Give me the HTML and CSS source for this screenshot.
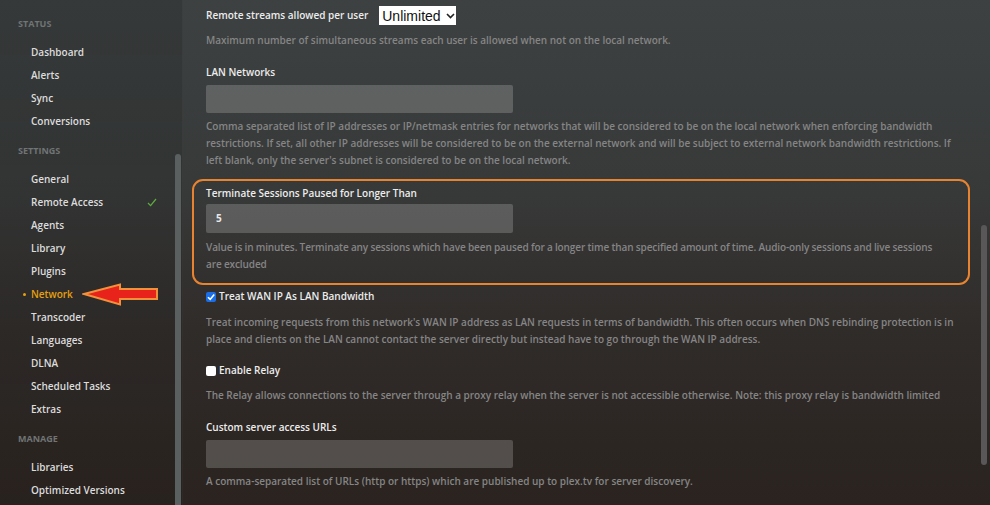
FILE: index.html
```html
<!DOCTYPE html>
<html>
<head>
<meta charset="utf-8">
<link rel="stylesheet" href="styles.css">
</head>
<body>
<div class="app">
  <nav class="sidebar">
    <div class="nav-head">Status</div>
    <div class="nav-item">Dashboard</div>
    <div class="nav-item">Alerts</div>
    <div class="nav-item">Sync</div>
    <div class="nav-item">Conversions</div>
    <div class="nav-head">Settings</div>
    <div class="nav-item">General</div>
    <div class="nav-item">Remote Access
      <svg class="nav-check" width="10" height="9" viewBox="0 0 10 9"><path d="M1 5 L3.6 7.6 L9 1" fill="none" stroke="#5faa3c" stroke-width="1.3"/></svg>
    </div>
    <div class="nav-item">Agents</div>
    <div class="nav-item">Library</div>
    <div class="nav-item">Plugins</div>
    <div class="nav-item active">Network</div>
    <div class="nav-item">Transcoder</div>
    <div class="nav-item">Languages</div>
    <div class="nav-item">DLNA</div>
    <div class="nav-item">Scheduled Tasks</div>
    <div class="nav-item">Extras</div>
    <div class="nav-head">Manage</div>
    <div class="nav-item">Libraries</div>
    <div class="nav-item">Optimized Versions</div>
    <div class="side-scroll"></div>
    <svg class="arrow" width="80" height="26" viewBox="0 0 80 26">
      <path d="M2 11 L38 1.5 L38 6 L75 6 L75 16 L38 16 L38 21.5 Z" fill="#e8231c" stroke="#f2913a" stroke-width="2" stroke-linejoin="miter"/>
    </svg>
  </nav>
  <main class="main">
    <div class="row-inline">
      <span class="label">Remote streams allowed per user</span>
      <span class="select">Unlimited<svg width="9" height="6" viewBox="0 0 9 6"><path d="M1 1 L4.5 4.5 L8 1" fill="none" stroke="#222" stroke-width="1.6"/></svg></span>
    </div>
    <p class="desc d-first">Maximum number of simultaneous streams each user is allowed when not on the local network.</p>

    <div class="group g-lan">
      <div class="label">LAN Networks</div>
      <div class="input"></div>
      <p class="desc">Comma separated list of IP addresses or IP/netmask entries for networks that will be considered to be on the local network when enforcing bandwidth restrictions. If set, all other IP addresses will be considered to be on the external network and will be subject to external network bandwidth restrictions. If left blank, only the server's subnet is considered to be on the local network.</p>
    </div>

    <div class="highlight">
      <div class="label">Terminate Sessions Paused for Longer Than</div>
      <div class="input filled">5</div>
      <p class="desc tight">Value is in minutes. Terminate any sessions which have been paused for a longer time than specified amount of time. Audio-only sessions and live sessions are excluded</p>
    </div>

    <div class="check-row c-wan">
      <span class="box checked"><svg width="10" height="10" viewBox="0 0 10 10"><path d="M2 5.2 L4.2 7.4 L8.2 2.6" fill="none" stroke="#fff" stroke-width="1.6"/></svg></span>
      <span class="label">Treat WAN IP As LAN Bandwidth</span>
    </div>
    <p class="desc d-wan">Treat incoming requests from this network's WAN IP address as LAN requests in terms of bandwidth. This often occurs when DNS rebinding protection is in place and clients on the LAN cannot contact the server directly but instead have to go through the WAN IP address.</p>

    <div class="check-row c-relay">
      <span class="box"></span>
      <span class="label">Enable Relay</span>
    </div>
    <p class="desc d-relay">The Relay allows connections to the server through a proxy relay when the server is not accessible otherwise. Note: this proxy relay is bandwidth limited</p>

    <div class="group g-urls">
      <div class="label">Custom server access URLs</div>
      <div class="input"></div>
      <p class="desc">A comma-separated list of URLs (http or https) which are published up to plex.tv for server discovery.</p>
    </div>
    <div class="main-scroll"></div>
  </main>
</div>
</body>
</html>
```
FILE: styles.css
```css
* { box-sizing: border-box; }
html, body { margin: 0; padding: 0; }
body {
  width: 990px;
  height: 505px;
  overflow: hidden;
  font-family: "Open Sans", "Noto Sans", sans-serif;
  background: linear-gradient(180deg, #3d4141 0%, #383a3a 35%, #302c2a 65%, #2a231f 100%);
}
.app {
  display: flex;
  height: 505px;
}
.sidebar {
  position: relative;
  width: 183px;
  flex: none;
  padding-top: 6px;
  background: linear-gradient(180deg, rgba(0,0,0,0.13), rgba(0,0,0,0.04));
  border-right: 1px solid rgba(255,255,255,0.03);
}
.nav-head {
  height: 23px;
  line-height: 23px;
  margin: 6px 0;
  padding-left: 18px;
  font-size: 9px;
  font-weight: 700;
  text-transform: uppercase;
  color: #707474;
}
.nav-item {
  position: relative;
  height: 23px;
  line-height: 23px;
  padding-left: 31px;
  font-size: 10px;
  font-weight: 600;
  color: #dcdcdc;
}
.nav-item.active { color: #e5a00d; }
.nav-item.active::before {
  content: "";
  position: absolute;
  left: 23px;
  top: 10px;
  width: 3px;
  height: 3px;
  border-radius: 50%;
  background: #e5a00d;
}
.nav-check {
  position: absolute;
  left: 147px;
  top: 7px;
}
.side-scroll {
  position: absolute;
  left: 175px;
  top: 154px;
  width: 6px;
  height: 360px;
  border-radius: 3px;
  background: #5a5f5f;
}
.arrow {
  position: absolute;
  left: 82px;
  top: 283px;
}
.main {
  position: relative;
  flex: 1;
  padding: 6px 34px 0 23px;
  color: #ececec;
}
.label {
  font-size: 10px;
  font-weight: 600;
  line-height: 17px;
  color: #ececec;
}
.desc {
  margin: 0;
  font-size: 10px;
  font-weight: 600;
  line-height: 17px;
  color: #858585;
}
.desc.tight {
  letter-spacing: -0.1px;
  word-spacing: -0.2px;
}
.row-inline {
  display: flex;
  align-items: center;
  gap: 11px;
  height: 19px;
}
.select {
  display: inline-flex;
  align-items: center;
  gap: 5px;
  width: 77px;
  height: 19px;
  padding-left: 3px;
  background: #fff;
  color: #111;
  font-family: "Liberation Sans", Arial, sans-serif;
  font-size: 14px;
  font-weight: 400;
}
.d-first { margin-top: 7px; }
.group.g-lan { margin-top: 15px; }
.input {
  width: 307px;
  height: 28px;
  margin: 4px 0 5px;
  border-radius: 2px;
  background: rgba(255,255,255,0.19);
  font-size: 10px;
  font-weight: 700;
  line-height: 29px;
  padding-left: 10px;
  color: #e8e8e8;
}
.highlight {
  margin: 10px -14px 0 -14px;
  padding: 4px 24px 10px 12px;
  border: 2px solid #e8842f;
  border-radius: 11px;
}
.highlight .input { height: 29px; margin: 2px 0 6px; }
.check-row {
  display: flex;
  align-items: center;
  gap: 3px;
  height: 17px;
}
.c-wan { margin-top: 3px; }
.box {
  width: 10px;
  height: 10px;
  border-radius: 2px;
  background: #fff;
  display: inline-flex;
}
.box.checked { background: #1a6fe8; }
.d-wan { margin-top: 9px; }
.c-relay { margin-top: 14px; }
.d-relay { margin-top: 8px; }
.group.g-urls { margin-top: 15px; }
.main-scroll {
  position: absolute;
  left: 798px;
  top: 225px;
  width: 6px;
  height: 240px;
  border-radius: 3px;
  background: #595757;
}
```
